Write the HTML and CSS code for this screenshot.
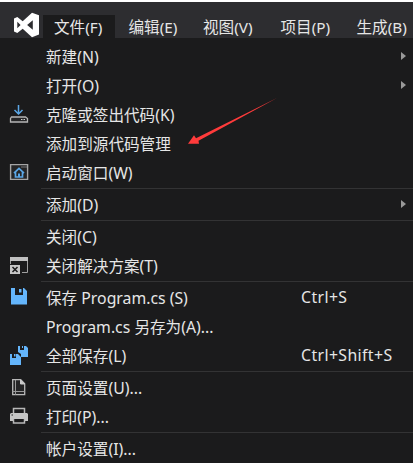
FILE: index.html
```html
<!DOCTYPE html>
<html lang="zh-CN">
<head>
<meta charset="utf-8">
<title>文件菜单</title>
<link rel="stylesheet" href="styles.css">
</head>
<body>
<header class="menubar">
  <svg class="logo" viewBox="0 0 26 26"><path fill="#fff" fill-rule="evenodd" d="M18 .7 25 3.300V22.500L18 25.200 8.700 16.800 3.300 21 0 19.500V6.500L3.300 5 8.700 9.200ZM18.800 8.300 13.100 13 18.800 17.700ZM3.300 9.700V16.300L6.600 13Z"/></svg>
  <nav class="tabs">
    <span class="tab active">文件<i>(F)</i></span><span class="tab">编辑<i>(E)</i></span><span class="tab">视图<i>(V)</i></span><span class="tab">项目<i>(P)</i></span><span class="tab">生成<i>(B)</i></span>
  </nav>
</header>
<main class="menu">
  <div class="row"><span class="icon"></span><span class="label">新建<i>(N)</i></span><b class="more"></b></div>
  <div class="row"><span class="icon"></span><span class="label">打开<i>(O)</i></span><b class="more"></b></div>
  <div class="row"><span class="icon"><svg viewBox="0 0 20 20"><path d="M9.500 0v8.500M5.500 5l4 4 4-4" fill="none" stroke="#5ba7e6" stroke-width="1.500"/><path d="M2.500 12h14l2 1.500v3.500h-17v-3.500z" fill="#252526" stroke="#b5b5b5" stroke-width="1.300"/><path d="M12 14.500h1.500m1 0H16" stroke="#ccc"/></svg></span><span class="label">克隆或签出代码<i>(K)</i></span></div>
  <div class="row"><span class="icon"></span><span class="label">添加到源代码管理</span></div>
  <div class="row"><span class="icon"><svg viewBox="0 0 20 20"><path d="M1.600 1.600h17v14.800h-17z" fill="#252526" stroke="#a5a5a5" stroke-width="1.400"/><path d="M12.500 4h1m1 0h1m1 0h1" stroke="#ccc"/><path d="m5 10.200 5-4.700 5 4.700M6.500 9v5h7V9" fill="none" stroke="#5ba7e6" stroke-width="1.700"/><path d="M9 10.500h2V14H9z" fill="#5ba7e6"/></svg></span><span class="label">启动窗口<i>(W)</i></span></div>
  <hr>
  <div class="row"><span class="icon"></span><span class="label">添加<i>(D)</i></span><b class="more"></b></div>
  <hr>
  <div class="row"><span class="icon"></span><span class="label">关闭<i>(C)</i></span></div>
  <div class="row"><span class="icon"><svg viewBox="0 0 20 20"><path d="M1 1h18v4H1z" fill="#c0c0c0"/><path d="M1.500 5v3M18.500 5v11.500H13" fill="none" stroke="#a0a0a0"/><path d="M1 9h10v9H1z" fill="#c6c6c6"/><path d="m3.500 11 5 5m0-5-5 5" stroke="#1b1b1c" stroke-width="1.500"/></svg></span><span class="label">关闭解决方案<i>(T)</i></span></div>
  <hr>
  <div class="row"><span class="icon"><svg viewBox="0 0 20 20"><path fill="#64b5fb" d="M2 0h4v7h8V0h1l3 3v13.500H2z"/><path fill="#64b5fb" d="M10 1h2.500v3.500H10z"/></svg></span><span class="label">保存<i> Program.cs (S)</i></span><kbd>Ctrl+S</kbd></div>
  <div class="row"><span class="icon"></span><span class="label"><i>Program.cs </i>另存为<i>(A)...</i></span></div>
  <div class="row"><span class="icon"><svg viewBox="0 0 20 20"><path fill="#64b5fb" d="M9 0h2v4h4V0h2l2 2v9h-7V8L9 6zM13 0h1v2h-1zM1 8h2v4h4V8h2l3 3v8H1zM5 8h1.500v2.500H5z"/></svg></span><span class="label">全部保存<i>(L)</i></span><kbd>Ctrl+Shift+S</kbd></div>
  <hr>
  <div class="row"><span class="icon"><svg viewBox="0 0 20 20"><path d="M3.700 1.700h8l4 4v11h-12z" fill="#252526" stroke="#b8b8b8" stroke-width="1.300"/><path d="M6.500 2v15M3.500 13.500h12" stroke="#999"/><path d="M11.500 2v4h4z" fill="#ccc" stroke="#ccc"/></svg></span><span class="label">页面设置<i>(U)...</i></span></div>
  <div class="row"><span class="icon"><svg viewBox="0 0 20 20"><path d="M4.500 6V1.500h11V6M4.500 11v5h11v-5" fill="none" stroke="#b8b8b8" stroke-width="1.500"/><path d="M2 6h16l1 1v7h-3v-2H4v2H1V7z" fill="#c5c5c5"/><path d="M2.500 8H4" stroke="#222"/></svg></span><span class="label">打印<i>(P)...</i></span></div>
  <hr>
  <div class="row"><span class="icon"></span><span class="label">帐户设置<i>(I)...</i></span></div>
</main>
<svg class="pointer" viewBox="0 0 91 48"><path fill="#ff3b3b" d="M89 2 10.500 44.800 11 47.700H0L6 39.300 8 42.300Z"/></svg>
</body>
</html>
```
FILE: styles.css
```css
* { box-sizing: border-box; }
body {
  margin: 0;
  width: 413px;
  height: 463px;
  overflow: hidden;
  position: relative;
  background: #1b1b1c;
  border-top: 2px solid #fff;
  color: #e6e6e6;
  font: 15.6px/29px "Noto Sans", "Noto Sans CJK SC", sans-serif;
}
i, kbd { font-style: normal; font-family: "Noto Sans", sans-serif; font-size: 15.8px; }
.label, .tab { font-family: "Noto Sans CJK SC", sans-serif; white-space: pre; }
.menubar {
  display: flex;
  height: 36px;
  padding-left: 14px;
  background: #2d2d30;
}
.logo { width: 26px; height: 26px; margin-top: 10px; flex: none; }
.tabs { display: flex; margin: 13px 0 0 3px; height: 23px; line-height: 22px; }
.tab { flex: none; width: 76px; padding-left: 13.500px; }
.tab i { font-size: 15.3px; }
.tab:first-child { width: 72px; padding-left: 11px; }
.tab:nth-child(3) { padding-left: 12px; }
.active { background: #1b1b1c; }
.menu { padding-top: 4px; }
.row { display: flex; align-items: center; height: 29px; }
.icon { width: 46px; height: 20px; padding-left: 9px; flex: none; }
.icon svg { display: block; width: 20px; height: 20px; }
.label { width: 255px; height: 29px; line-height: 28px; flex: none; }
kbd { white-space: pre; letter-spacing: 0.4px; height: 29px; line-height: 28px; }
.more {
  width: 0;
  height: 0;
  margin-left: 100px;
  margin-top: -1px;
  border: 4.500px solid transparent;
  border-left: 5.500px solid #999;
  border-right: 0;
}
hr {
  height: 1px;
  margin: 1px 0 1px 41px;
  border: 0;
  background: #333334;
}
.pointer { position: absolute; left: 188px; top: 94px; width: 91px; height: 48px; }
```
